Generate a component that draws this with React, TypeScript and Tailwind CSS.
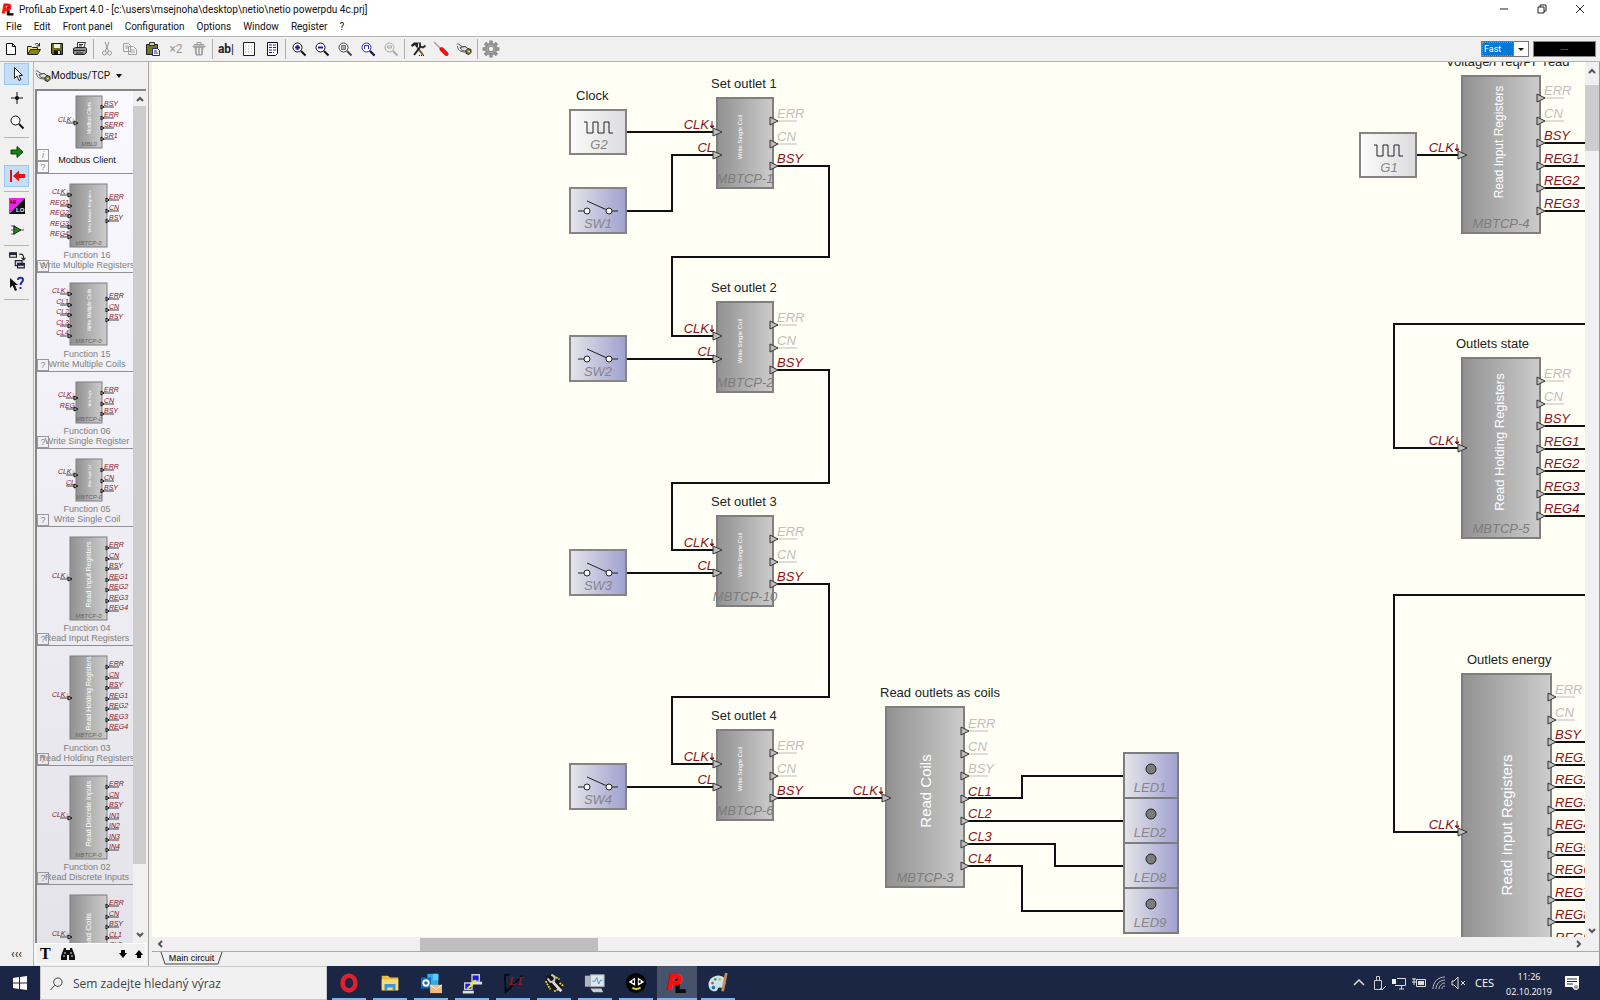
import type { ReactNode } from "react";
import clsx from "clsx";

type Pin = { label: string; y: number; off?: boolean };

type BlockProps = {
  x: number;
  y: number;
  w: number;
  h: number;
  title?: string;
  titleX?: number;
  name: string;
  text: string;
  textSize: number;
  textX: number;
  textY: number;
  inputs: Pin[];
  outputs: Pin[];
};

const pins = (labels: string[], start: number, step: number, off: string[] = []): Pin[] =>
  labels.map((label, i) => ({ label, y: start + Math.round(i * step), off: off.includes(label) }));

/* ---------- schematic ---------- */

function Block(p: BlockProps) {
  const right = p.x + p.w;
  return (
    <g>
      {p.title ? (
        <text x={p.titleX} y={p.y - 10} fontSize={13} fill="#222">
          {p.title}
        </text>
      ) : null}
      <rect x={p.x} y={p.y} width={p.w} height={p.h} fill="url(#block)" stroke="#7f7f7f" strokeWidth={2} />
      <text
        transform={`translate(${p.textX} ${p.textY}) rotate(-90)`}
        textAnchor="middle"
        fontSize={p.textSize}
        fill="#fff"
      >
        {p.text}
      </text>
      <text x={p.x + p.w / 2} y={p.y + p.h - 5} textAnchor="middle" fontSize={13} fontStyle="italic" fill="#7c7c7c">
        {p.name}
      </text>
      {p.inputs.map((pin) => (
        <g key={pin.label}>
          <text
            x={p.x - (pin.label === "CLK" ? 8 : 3)}
            y={pin.y - 3}
            textAnchor="end"
            fontSize={13}
            fontStyle="italic"
            fill="#8b1018"
          >
            {pin.label}
          </text>
          {pin.label === "CLK" ? (
            <path d={`M${p.x - 5} ${pin.y - 11}v7M${p.x - 7} ${pin.y - 6}h4l-2 2z`} stroke="#8b1018" fill="#8b1018" />
          ) : null}
          <path d={`M${p.x - 4} ${pin.y - 4}l9 4l-9 4z`} fill="#bdbdbd" stroke="#333" />
        </g>
      ))}
      {p.outputs.map((pin) => (
        <g key={pin.label}>
          {pin.off ? <path d={`M${right + 4} ${pin.y}h20`} stroke="#bdbdbd" /> : null}
          <text x={right + 4} y={pin.y - 3} fontSize={13} fontStyle="italic" fill={pin.off ? "#c0c0c0" : "#8b1018"}>
            {pin.label}
          </text>
          <path d={`M${right - 3} ${pin.y - 4}l8 4l-8 4z`} fill="#bdbdbd" stroke="#333" />
        </g>
      ))}
    </g>
  );
}

function Clock({ x, y, name }: { x: number; y: number; name: string }) {
  return (
    <g>
      <rect x={x} y={y} width={56} height={44} fill="url(#clock)" stroke="#858585" strokeWidth={2} />
      <path d={`M${x + 14} ${y + 12}h3v11h6v-11h5v11h6v-11h5v11h4`} fill="none" stroke="#222" />
      <text x={x + 29} y={y + 39} textAnchor="middle" fontSize={13} fontStyle="italic" fill="#868686">
        {name}
      </text>
    </g>
  );
}

function Switch({ y, name }: { y: number; name: string }) {
  return (
    <g>
      <rect x={570} y={y} width={56} height={45} fill="url(#lilac)" stroke="#858585" strokeWidth={2} />
      <path d={`M578 ${y + 23}h6M612 ${y + 23}h6M587 ${y + 13}l20 9`} stroke="#222" />
      <circle cx={587} cy={y + 23} r={3} fill="#fff" stroke="#222" />
      <circle cx={609} cy={y + 23} r={3} fill="#fff" stroke="#222" />
      <text x={598} y={y + 40} textAnchor="middle" fontSize={13} fontStyle="italic" fill="#868686">
        {name}
      </text>
    </g>
  );
}

function Led({ y, name }: { y: number; name: string }) {
  return (
    <g>
      <rect x={1124} y={y} width={54} height={45} fill="url(#lilac)" stroke="#7d7d7d" strokeWidth={2} />
      <circle cx={1151} cy={y + 16} r={5} fill="#7b7b7b" stroke="#222" />
      <text x={1150} y={y + 39} textAnchor="middle" fontSize={13} fontStyle="italic" fill="#868686">
        {name}
      </text>
    </g>
  );
}

const OUTLETS = [
  { y: 98, n: 1, name: "MBTCP-1", drop: 257, next: 336 },
  { y: 302, n: 2, name: "MBTCP-2", drop: 483, next: 550 },
  { y: 516, n: 3, name: "MBTCP-10", drop: 697, next: 764 },
  { y: 730, n: 4, name: "MBTCP-6", drop: 0, next: 0 },
];

const WIRES = [
  "M627 132H713",
  "M627 211H672V155H713",
  "M627 359H713",
  "M627 573H713",
  "M627 787H713",
  "M777 798H883",
  "M968 798H1022V776H1123",
  "M968 821H1123",
  "M968 844H1055V866H1123",
  "M968 866H1022V911H1123",
  "M1417 155H1458",
  "M1585 324H1394V448H1458",
  "M1585 595H1394V832H1458",
];

const OFF = ["ERR", "CN"];
const REGS = ["REG1", "REG2", "REG3", "REG4", "REG5", "REG6", "REG7", "REG8", "REG9"];

function Circuit() {
  const live4 = pins(["ERR", "CN", "BSY", ...REGS.slice(0, 3)], 98, 22.6, OFF);
  const live5 = pins(["ERR", "CN", "BSY", ...REGS.slice(0, 4)], 381, 22.5, OFF);
  const energy = pins(["ERR", "CN", "BSY", ...REGS], 697, 22.5, OFF);
  const right = (list: Pin[], x: number) => list.filter((p) => !p.off).map((p) => `M${x} ${p.y}H1586`);
  const wires = [...WIRES, ...right(live4, 1545), ...right(live5, 1545), ...right(energy, 1555)];

  return (
    <svg className="absolute inset-0 h-full w-full" fontFamily="'Liberation Sans', Arial, sans-serif" aria-label="Main circuit">
      <defs>
        <linearGradient id="block">
          <stop offset="0" stopColor="#919191" />
          <stop offset="1" stopColor="#cccccc" />
        </linearGradient>
        <linearGradient id="clock">
          <stop offset="0" stopColor="#fbfbfb" />
          <stop offset="1" stopColor="#dcdcde" />
        </linearGradient>
        <linearGradient id="lilac">
          <stop offset="0" stopColor="#e5e5e9" />
          <stop offset="1" stopColor="#a0a0d0" />
        </linearGradient>
      </defs>
      <g transform="translate(-152 -62)">
        <g fill="none" stroke="#111" strokeWidth={2}>
          {wires.map((d) => (
            <path key={d} d={d} />
          ))}
          {OUTLETS.filter((o) => o.next).map((o) => (
            <path key={o.n} d={`M777 ${o.y + 68}H829V${o.drop}H672V${o.next}H713`} />
          ))}
        </g>

        <text x={576} y={100} fontSize={13} fill="#222">
          Clock
        </text>
        <Clock x={570} y={110} name="G2" />
        <Clock x={1360} y={133} name="G1" />
        <Switch y={188} name="SW1" />
        <Switch y={336} name="SW2" />
        <Switch y={550} name="SW3" />
        <Switch y={764} name="SW4" />

        {OUTLETS.map((o) => (
          <Block
            key={o.n}
            x={717}
            y={o.y}
            w={56}
            h={90}
            title={`Set outlet ${o.n}`}
            titleX={711}
            name={o.name}
            text="Write Single Coil"
            textSize={6}
            textX={742}
            textY={o.y + 39}
            inputs={pins(["CLK", "CL"], o.y + 34, 23)}
            outputs={pins(["ERR", "CN", "BSY"], o.y + 23, 22.5, OFF)}
          />
        ))}

        <Block
          x={886}
          y={707}
          w={78}
          h={180}
          title="Read outlets as coils"
          titleX={880}
          name="MBTCP-3"
          text="Read Coils"
          textSize={15}
          textX={931}
          textY={791}
          inputs={pins(["CLK"], 798, 0)}
          outputs={pins(["ERR", "CN", "BSY", "CL1", "CL2", "CL3", "CL4"], 731, 22.5, ["ERR", "CN", "BSY"])}
        />
        <Led y={753} name="LED1" />
        <Led y={798} name="LED2" />
        <Led y={843} name="LED8" />
        <Led y={888} name="LED9" />

        <Block
          x={1462}
          y={76}
          w={78}
          h={157}
          title="Voltage/Freq/PF read"
          titleX={1446}
          name="MBTCP-4"
          text="Read Input Registers"
          textSize={12}
          textX={1503}
          textY={142}
          inputs={pins(["CLK"], 155, 0)}
          outputs={live4}
        />
        <Block
          x={1462}
          y={358}
          w={78}
          h={180}
          title="Outlets state"
          titleX={1456}
          name="MBTCP-5"
          text="Read Holding Registers"
          textSize={13}
          textX={1504}
          textY={442}
          inputs={pins(["CLK"], 448, 0)}
          outputs={live5}
        />
        <Block
          x={1462}
          y={674}
          w={89}
          h={316}
          title="Outlets energy"
          titleX={1467}
          name=""
          text="Read Input Registers"
          textSize={15}
          textX={1512}
          textY={825}
          inputs={pins(["CLK"], 832, 0)}
          outputs={energy}
        />
      </g>
    </svg>
  );
}

/* ---------- component library ---------- */

type LibItem = {
  lines: string[];
  info?: boolean;
  height: string;
  wide?: boolean;
  top: number;
  h: number;
  text: string;
  size: number;
  name: string;
  ins: Pin[];
  outs: Pin[];
};

const regOuts = ["ERR", "CN", "BSY", "REG1", "REG2", "REG3", "REG4"];

const LIBRARY: LibItem[] = [
  { lines: ["Modbus Client"], info: true, height: "h-[83px]", top: 5, h: 52, text: "Modbus Client", size: 5, name: "MBL0", ins: pins(["CLK"], 32, 0), outs: pins(["BSY", "ERR", "SERR", "SR1"], 16, 10.5) },
  { lines: ["Function 16", "Write Multiple Registers"], height: "h-[99px]", wide: true, top: 10, h: 63, text: "Write Multiple Registers", size: 4, name: "MBTCP-0", ins: pins(["CLK", "REG1", "REG2", "REG3", "REG4"], 21, 10.5), outs: pins(["ERR", "CN", "BSY"], 26, 10.5) },
  { lines: ["Function 15", "Write Multiple Coils"], height: "h-[99px]", wide: true, top: 10, h: 62, text: "Write Multiple Coils", size: 5, name: "MBTCP-0", ins: pins(["CLK", "CL1", "CL2", "CL3", "CL4"], 21, 10.5), outs: pins(["ERR", "CN", "BSY"], 26, 10.5) },
  { lines: ["Function 06", "Write Single Register"], height: "h-[77px]", top: 10, h: 41, text: "Write Single", size: 3, name: "MBTCP-0", ins: pins(["CLK", "REG"], 26, 10.5), outs: pins(["ERR", "CN", "BSY"], 21, 10.5) },
  { lines: ["Function 05", "Write Single Coil"], height: "h-[78px]", top: 10, h: 42, text: "Write Single Coil", size: 3, name: "MBTCP-0", ins: pins(["CLK", "CL"], 26, 10.5), outs: pins(["ERR", "CN", "BSY"], 21, 10.5) },
  { lines: ["Function 04", "Read Input Registers"], height: "h-[119px]", wide: true, top: 10, h: 83, text: "Read Input Registers", size: 7, name: "MBTCP-0", ins: pins(["CLK"], 52, 0), outs: pins(regOuts, 21, 10.5) },
  { lines: ["Function 03", "Read Holding Registers"], height: "h-[120px]", wide: true, top: 10, h: 83, text: "Read Holding Registers", size: 7, name: "MBTCP-0", ins: pins(["CLK"], 52, 0), outs: pins(regOuts, 21, 10.5) },
  { lines: ["Function 02", "Read Discrete Inputs"], height: "h-[119px]", wide: true, top: 10, h: 83, text: "Read Discrete Inputs", size: 7, name: "MBTCP-0", ins: pins(["CLK"], 52, 0), outs: pins(["ERR", "CN", "BSY", "IN1", "IN2", "IN3", "IN4"], 21, 10.5) },
  { lines: ["Function 01", "Read Coils"], height: "h-[119px]", wide: true, top: 10, h: 83, text: "Read Coils", size: 8, name: "MBTCP-0", ins: pins(["CLK"], 52, 0), outs: pins(["ERR", "CN", "BSY", "CL1", "CL2", "CL3", "CL4"], 21, 10.5) },
];

function Thumb({ item }: { item: LibItem }) {
  const x = item.wide ? 33 : 39;
  const w = item.wide ? 37 : 26;
  return (
    <svg
      width={96}
      height={item.top + item.h + 1}
      className="block shrink-0 overflow-visible"
      fontFamily="'Liberation Sans', Arial, sans-serif"
      aria-hidden="true"
    >
      <rect x={x} y={item.top} width={w} height={item.h} fill="url(#block)" stroke="#7f7f7f" />
      <text
        transform={`translate(${x + w / 2 + 2} ${item.top + item.h / 2 - 4}) rotate(-90)`}
        textAnchor="middle"
        fontSize={item.size}
        fill="#fff"
      >
        {item.text}
      </text>
      <text x={x + w / 2} y={item.top + item.h - 2} textAnchor="middle" fontSize={6} fontStyle="italic" fill="#666">
        {item.name}
      </text>
      {item.ins.map((p) => (
        <g key={p.label}>
          <path d={`M${x - 10} ${p.y}h10`} stroke="#444" />
          <path d={`M${x - 2} ${p.y - 2}l4 2l-4 2z`} fill="#bbb" stroke="#111" />
          <text x={x - 1} y={p.y - 1} textAnchor="end" fontSize={7} fontStyle="italic" fill="#8b1018">
            {p.label === "CLK" ? "CLK↓" : p.label}
          </text>
        </g>
      ))}
      {item.outs.map((p) => (
        <g key={p.label}>
          <path d={`M${x + w} ${p.y}h12`} stroke="#444" />
          <path d={`M${x + w - 1} ${p.y - 2}l3 2l-3 2z`} fill="#bbb" stroke="#111" />
          <text x={x + w + 2} y={p.y - 1} fontSize={7} fontStyle="italic" fill="#8b1018">
            {p.label}
          </text>
        </g>
      ))}
    </svg>
  );
}

function SmallBox({ children }: { children: ReactNode }) {
  return (
    <button className="flex h-3 w-3 items-center justify-center border border-[#999] font-['Liberation_Sans',sans-serif] text-[9px] leading-none text-[#888]">
      {children}
    </button>
  );
}

function LibraryRow({ item }: { item: LibItem }) {
  return (
    <li className={clsx("relative flex shrink-0 flex-col justify-between overflow-hidden border-b border-[#909090]", item.height)}>
      <Thumb item={item} />
      <div
        className={clsx(
          "flex flex-col items-center pl-1 font-['Liberation_Sans',sans-serif] text-[9px] leading-[10px] whitespace-nowrap",
          item.info ? "pb-2 text-[#111]" : "pb-0.5 text-[#808080]"
        )}
      >
        {item.lines.map((line) => (
          <span key={line}>{line}</span>
        ))}
      </div>
      <div className="absolute bottom-0 left-0">
        {item.info ? (
          <SmallBox>
            <i>i</i>
          </SmallBox>
        ) : null}
        <SmallBox>?</SmallBox>
      </div>
    </li>
  );
}

/* ---------- icons ---------- */

function Icon({ children, size = 16 }: { children: ReactNode; size?: number }) {
  return (
    <svg width={size} height={size} viewBox="0 0 16 16" fill="none" aria-hidden="true" className="shrink-0">
      {children}
    </svg>
  );
}

function Lens({ color = "#111", mark, tint = "#fff" }: { color?: string; mark?: ReactNode; tint?: string }) {
  return (
    <Icon>
      <circle cx="6.500" cy="6.500" r="4.500" fill={tint} stroke={color} />
      <path d="M10 10l4.500 4.500" stroke={color} strokeWidth="2" />
      {mark}
    </Icon>
  );
}

const PlugIcon = () => (
  <Icon>
    <path d="M1 3.500c0-1 1-1 2 0l3 2h4M1.500 5c0 4 3 6 8 6" stroke="#555" />
    <path d="M4 6.500l5-1 3 2-1 3-5-1z" fill="#ddd" stroke="#555" />
    <path d="M10 9.500l2-2 3 1v3l-2 2-3-1z" fill="#8d8930" stroke="#222" />
    <path d="M12 10.500h2" stroke="#eee56a" />
  </Icon>
);

const gearTeeth = [0, 45, 90, 135, 180, 225, 270, 315];

const TOOLBAR: { label: string; icon: ReactNode }[][] = [
  [
    { label: "New", icon: <Icon><path d="M3.500 2.500h6l3 3v8h-9zM9.500 2.500v3h3" fill="#fff" stroke="#111" /></Icon> },
    {
      label: "Open",
      icon: (
        <Icon>
          <path d="M1.500 13V5.500h4l1 1h5V9" fill="#e8e070" stroke="#222" />
          <path d="M1.500 13.500L4.500 8.500h10l-3 5z" fill="#85851a" stroke="#222" />
          <path d="M9 3.500c2-2 3-1 4 1M13.500 2v3h-3" stroke="#222" />
        </Icon>
      ),
    },
    {
      label: "Save",
      icon: (
        <Icon>
          <path d="M2.500 2.500h11v11h-10l-1-1z" fill="#6e6e17" stroke="#111" />
          <path d="M5 3h6v4H5z" fill="#eee" />
          <path d="M5 9.500h7V13H5z" fill="#111" />
          <path d="M9 10h2v3H9z" fill="#ddd" />
        </Icon>
      ),
    },
    {
      label: "Print",
      icon: (
        <Icon>
          <path d="M5.500 7V1.500h8L11.500 7" fill="#fff" stroke="#333" />
          <path d="M1.500 7.500l2-1h10l1 1v4l-2 2h-10l-1-1z" fill="#8f8f8f" stroke="#222" />
          <path d="M2 9.500h11M4 12h7M7 3.500h4M7 5h3" stroke="#222" />
          <path d="M9 10.500h2" stroke="#ccc430" />
        </Icon>
      ),
    },
  ],
  [
    {
      label: "Cut",
      icon: (
        <Icon>
          <path d="M6 1l3.500 9M10 1L6.500 10" stroke="#999" />
          <circle cx="5.500" cy="12" r="2" stroke="#999" />
          <circle cx="10.500" cy="12" r="2" stroke="#999" />
        </Icon>
      ),
    },
    { label: "Copy", icon: <Icon><path d="M1.500 2.500h5l2 2v6h-7zM6.500 5.500h5l3 3v5h-8zM3 5h3M3 7h3M8 9h4M8 11h5" fill="#f3f3f3" stroke="#a0a0a0" /></Icon> },
    {
      label: "Paste",
      icon: (
        <Icon>
          <path d="M1.500 3.500h11v10h-11z" fill="#77761f" stroke="#222" />
          <path d="M4.500 1.500h5v3h-5z" fill="#ccc" stroke="#333" />
          <path d="M7.500 7.500h5l2 2v5h-7z" fill="#fff" stroke="#26267f" />
          <path d="M9 10h3M9 12h4" stroke="#26267f" />
        </Icon>
      ),
    },
    { label: "Duplicate", icon: <span className="text-xs text-[#999]">×2</span> },
    { label: "Delete", icon: <Icon><path d="M3 3.500h10M6 3V1.500h4V3M2 5h12v1H2z" stroke="#999" /><path d="M4 6h8l-1 8H5z" fill="#b3b3b3" stroke="#999" /><path d="M6.500 7v6M9.500 7v6" stroke="#eee" /></Icon> },
  ],
  [
    { label: "Text", icon: <span className="text-xs whitespace-nowrap text-[#222]"><b>ab</b>|</span> },
    {
      label: "Grid",
      icon: (
        <Icon>
          <path d="M2.500 1.500h11v13h-11z" fill="#fff" stroke="#222" />
          <path d="M4 5h9M4 8h9M4 11h9" stroke="#aaa" strokeDasharray="1 2" />
        </Icon>
      ),
    },
    {
      label: "Parts list",
      icon: (
        <Icon>
          <path d="M3.500 1.500h10v11l-2 2h-8z" fill="#fff" stroke="#111" />
          <path d="M5 4h7M5 6.500h7M5 9h7M5 11.500h5" stroke="#2020d0" strokeDasharray="3 1" />
        </Icon>
      ),
    },
  ],
  [
    { label: "Zoom in", icon: <Lens mark={<path d="M4 6.500h5M6.500 4v5" stroke="#1010e0" strokeWidth="2" />} /> },
    { label: "Zoom out", icon: <Lens mark={<path d="M4 6.500h5" stroke="#1010e0" strokeWidth="2" />} /> },
    { label: "Zoom page", icon: <Lens color="#444" mark={<path d="M4.500 4.500h4v4h-4z" fill="#aaa" stroke="#777" />} /> },
    { label: "Zoom all", icon: <Lens color="#2a2ac8" mark={<><path d="M4.500 8V4.500h4V8" stroke="#2a2ac8" /><path d="M10 10l4.500 4.500" stroke="#222" strokeWidth="2" /></>} /> },
    { label: "Zoom selection", icon: <Lens color="#aaa" tint="#eee" mark={<path d="M4.500 5h4v2h-4z" stroke="#aaa" />} /> },
  ],
  [
    {
      label: "Tools",
      icon: (
        <Icon>
          <path d="M1 4l3-2.500h5L8 3v3H6L5 4 2 6z" fill="#222" />
          <path d="M7 6l6 8" stroke="#7a5a30" strokeWidth="2" />
          <path d="M11 5L4 14" stroke="#222" strokeWidth="2" />
          <path d="M10 1.500v4l3 1 2.500-2" stroke="#333" strokeWidth="2" />
          <path d="M9 14.500h6" stroke="#222" strokeDasharray="1 1" />
        </Icon>
      ),
    },
    { label: "Screwdriver", icon: <Icon><path d="M1 1l6 6" stroke="#b99" strokeWidth="1.500" /><path d="M8.500 8l5 5" stroke="#e11" strokeWidth="4" strokeLinecap="round" /></Icon> },
    { label: "Connect", icon: <PlugIcon /> },
  ],
  [
    {
      label: "Settings",
      icon: (
        <Icon size={18}>
          {gearTeeth.map((a) => (
            <path key={a} d="M7 1h2v3H7z" fill="#999" stroke="#888" transform={`rotate(${a} 8 8)`} />
          ))}
          <circle cx="8" cy="8" r="4.500" fill="#bbb" stroke="#909090" strokeWidth="2" />
          <circle cx="8" cy="8" r="2.500" fill="#f0f0f0" stroke="#888" />
        </Icon>
      ),
    },
  ],
];

const SIDE_TOOLS: { label: string; icon: ReactNode; on?: boolean }[][] = [
  [
    { label: "Select", on: true, icon: <Icon><path d="M5.500 1.500v11l2.500-2.500 2 4.500 2-1-2-4h3.500z" fill="#fff" stroke="#222" /></Icon> },
    { label: "Wire", icon: <Icon><path d="M8 2v12M2 8h12" stroke="#111" /><circle cx="8" cy="8" r="2" fill="#111" /></Icon> },
    { label: "Zoom", icon: <Lens /> },
  ],
  [
    { label: "Run", icon: <Icon><path d="M2 6h6V2.500l6 5.500-6 5.500V10H2z" fill="#158515" stroke="#0b3d0b" /></Icon> },
    { label: "Stop", on: true, icon: <Icon><path d="M2 2v12" stroke="#e01010" strokeWidth="2" /><path d="M16 6h-6V2.500L4 8l6 5.500V10h6z" fill="#e81010" /></Icon> },
  ],
  [
    {
      label: "High low",
      icon: (
        <Icon>
          <path d="M0 0h16L0 16z" fill="#f020f0" />
          <path d="M16 0v16H0z" fill="#111" />
          <text x="1" y="6" fontSize="6" fontWeight="bold" fill="#222" fontFamily="Liberation Sans">HI</text>
          <text x="7" y="14" fontSize="6" fontWeight="bold" fill="#eee" fontFamily="Liberation Sans">LO</text>
        </Icon>
      ),
    },
    { label: "Probe", icon: <Icon><path d="M5 3v10M2 4h3M2 8h3M2 12h3M12 8h3" stroke="#555" /><path d="M5 4l7 4-7 4z" fill="#159015" stroke="#222" /></Icon> },
  ],
  [
    {
      label: "Windows",
      icon: (
        <Icon size={18}>
          <path d="M1.500 1.500h6v4h-6zM8.500 11h6v4h-6zM6.500 8.500h6V11h-4v2h-2z" fill="#dde" stroke="#222" />
          <path d="M1 2.500h7M8 12h7" stroke="#224" strokeWidth="2" />
          <path d="M10 3c3-1 4 1 4 4M12 6l2 2 1.500-2" stroke="#222" />
        </Icon>
      ),
    },
    {
      label: "Help",
      icon: (
        <Icon>
          <path d="M1 2v10l2.500-2.500L6 15l2-1-2-5h3z" fill="#111" />
          <path d="M9 4c0-3 5-3 5 0 0 2-2.500 2-2.500 5" stroke="#2a2ab0" strokeWidth="2" />
          <path d="M10.500 11h2v2h-2z" fill="#2a2ab0" />
        </Icon>
      ),
    },
  ],
];

const Chevron = ({ d }: { d: string }) => (
  <svg width={8} height={8} viewBox="0 0 8 8" fill="none" stroke="#555" strokeWidth={2} aria-hidden="true">
    <path d={d} />
  </svg>
);

const UP = "M1 6l3-3 3 3";
const DOWN = "M1 2l3 3 3-3";
const LEFT = "M6 1L3 4l3 3";
const RIGHT = "M2 1l3 3-3 3";

function LogoMark() {
  return (
    <g fontFamily="'Liberation Sans', Arial, sans-serif" fontWeight="bold" strokeWidth={2}>
      <text x="10" y="22" fontSize="18" fill="#0a0a0a" stroke="#0a0a0a">
        L
      </text>
      <text x="2" y="19" fontSize="22" fontStyle="italic" fill="#ff0d0d" stroke="#ff0d0d">
        P
      </text>
    </g>
  );
}

/* ---------- task bar ---------- */

const APPS: { label: string; on?: boolean; icon: ReactNode }[] = [
  { label: "Opera", icon: <ellipse cx="12" cy="12" rx="7" ry="8" stroke="#e0202c" strokeWidth="5" /> },
  {
    label: "Explorer",
    icon: (
      <>
        <path d="M3 4h7l2 2h9v14H3z" fill="#f0b840" />
        <path d="M3 8h18v12H3z" fill="#fcd876" />
        <path d="M6 20v-7h12v7h-3v-3H9v3z" fill="#3d96dc" />
      </>
    ),
  },
  {
    label: "Outlook",
    icon: (
      <>
        <path d="M8 2h12v15H8z" fill="#35a8e8" />
        <path d="M14 2h6v7h-6z" fill="#5cc9f5" />
        <path d="M1 6h11v12H1z" fill="#0f6cbd" />
        <circle cx="6.500" cy="12" r="3" stroke="#fff" strokeWidth="2" />
        <path d="M11 14h13v9H11z" fill="#f3bb7c" />
        <path d="M11 14l6.500 5 6.500-5" stroke="#fff" />
      </>
    ),
  },
  {
    label: "PuTTY",
    icon: (
      <>
        <path d="M12 3h8v7h-8zM4 12h8v7H4z" fill="#1a1ae0" stroke="#ccc" strokeWidth="1.500" />
        <path d="M11 12h12M2 22h12" stroke="#ddd" strokeWidth="3" />
        <path d="M16 9l-5 4 1 1-5 4" stroke="#f0ee20" strokeWidth="2" />
      </>
    ),
  },
  {
    label: "LT",
    icon: (
      <>
        <path d="M3 3l1 19L22 4M3 3h5" stroke="#080810" strokeWidth="2" />
        <text x="7" y="14" fontSize="14" fontWeight="bold" fontStyle="italic" fontFamily="Liberation Serif" fill="#8b1822">LT</text>
      </>
    ),
  },
  {
    label: "Service tool",
    icon: (
      <>
        <path d="M3 5l8-3 8 8 2 7-8 4-9-8z" fill="#15151a" />
        <path d="M3 10l5 9M9 3l9 5M18 12l4 3M12 21l5-2" stroke="#e8dc20" strokeWidth="2" strokeDasharray="2 1" />
        <path d="M10 10l10 11" stroke="#ddd" strokeWidth="3" />
        <path d="M5 7l3 4 4-1 1-4-3-3" stroke="#ccc" strokeWidth="2" />
      </>
    ),
  },
  {
    label: "Monitor",
    icon: (
      <>
        <path d="M1 4h14v12H1z" fill="#adb4bd" />
        <path d="M7 3h15v13H7z" fill="#dde7ee" stroke="#9ba6b0" />
        <path d="M9 10h3l2-4 2 7 2-4h2" stroke="#3a90c8" />
        <path d="M7 18h12l2 4H10z" fill="#c7cdd3" />
      </>
    ),
  },
  {
    label: "Face",
    icon: (
      <>
        <circle cx="12" cy="12" r="11" fill="#050505" />
        <path d="M11 6l-7 5 7 4zM14 6l7 5-7 4z" fill="#fff" />
        <path d="M9 9v3M16 9v3" stroke="#111" strokeWidth="2" />
        <path d="M8 17c2 2 6 2 9 0" stroke="#e8d820" strokeWidth="2" />
      </>
    ),
  },
  { label: "ProfiLab", on: true, icon: <LogoMark /> },
  {
    label: "Paint",
    icon: (
      <>
        <path d="M2 16C0 9 7 3 14 4c7 1 7 8 5 12-2 3-4 0-6 1s-1 4-4 4-6-1-7-5z" fill="#c8e4f0" />
        <circle cx="6" cy="12" r="1.500" fill="#e04040" />
        <circle cx="9" cy="8" r="1.500" fill="#40a850" />
        <circle cx="14" cy="8" r="1.500" fill="#f0b020" />
        <circle cx="7" cy="17" r="2" fill="#2e6db0" />
        <path d="M21 1L17 21" stroke="#c98a55" strokeWidth="3" />
      </>
    ),
  },
];

function Taskbar() {
  return (
    <footer className="flex h-[34px] shrink-0 items-stretch bg-[#1a2643] font-['Open_Sans',sans-serif] text-white">
      <button aria-label="Start" className="flex w-10 items-center justify-center">
        <svg width={14} height={14} viewBox="0 0 14 14" fill="#fff" aria-hidden="true">
          <path d="M0 2l6-1v5.500H0zM7 1l7-1v6.500H7zM0 7.500h6V13l-6-1zM7 7.500h7V14l-7-1z" />
        </svg>
      </button>
      <label className="flex w-[287px] items-center gap-2.5 border border-[#c8c8c8] bg-[#f1f1f1] pt-0.5 pl-[9px] text-[#333]">
        <svg width={13} height={14} viewBox="0 0 14 14" fill="none" stroke="#333" aria-hidden="true">
          <circle cx="8.500" cy="5" r="4.500" />
          <path d="M5 8.500L0.500 13.500" />
        </svg>
        <input
          aria-label="Search"
          placeholder="Sem zadejte hledaný výraz"
          className="min-w-0 flex-1 bg-transparent text-xs outline-none placeholder:text-[#444]"
        />
      </label>
      <nav className="flex gap-px pl-0.5">
        {APPS.map((app) => (
          <button
            key={app.label}
            aria-label={app.label}
            className={clsx("relative flex w-10 items-center justify-center", app.on && "bg-[#48526a]")}
          >
            <svg width={22} height={22} viewBox="0 0 24 24" fill="none" aria-hidden="true">
              {app.icon}
            </svg>
            <span className={clsx("absolute bottom-0 h-0.5 bg-[#76b9ed]", app.on ? "inset-x-0" : "inset-x-[3px]")} />
          </button>
        ))}
      </nav>
      <div className="ml-auto flex items-center pr-5 text-[11px]">
        <div className="flex items-center gap-1">
          <Icon><path d="M3 10l5-5 5 5" stroke="#ddd" strokeWidth="1.500" /></Icon>
          <Icon><path d="M3.500 5.500h7v9h-7zM5.500 5V1.500h3V5M9 13l2 2 4-4" stroke="#ccc" /></Icon>
          <Icon><path d="M6 3.500h8.500v7H4M8 14h5M10.500 11v3" stroke="#ddd" /><path d="M1 4h4v5H1z" fill="#eee" /></Icon>
          <Icon><path d="M5.500 4.500h9v7h-9zM1 4h4M1 7h4M3 3v7" stroke="#ddd" /><path d="M7 6h6v4H7z" fill="#ddd" /></Icon>
          <Icon><path d="M2 14C2 7 7 2 14 2M5 14c0-5 4-9 9-9M8 14c0-3 3-6 6-6M11 14c0-2 1-3 3-3" stroke="#bbb" /></Icon>
          <Icon><path d="M1 6h2l4-4v12L3 10H1zM10 6l4 4M14 6l-4 4" stroke="#ddd" /></Icon>
        </div>
        <span className="pl-2">CES</span>
        <div className="flex flex-col items-center px-3 pt-0.5 text-[9px] leading-[15px]">
          <span>11:26</span>
          <span>02.10.2019</span>
        </div>
        <button aria-label="Notifications">
          <Icon>
            <path d="M1 1h14v11h-4v3l-3-3H1z" fill="#fff" />
            <path d="M3 4h10M3 6.500h10M3 9h6" stroke="#1a2643" />
            <circle cx="12" cy="12" r="2.500" fill="#999" stroke="#fff" />
          </Icon>
        </button>
      </div>
    </footer>
  );
}

/* ---------- window ---------- */

const MENU = ["File", "Edit", "Front panel", "Configuration", "Options", "Window", "Register", "?"];

export default function App() {
  return (
    <div className="flex h-screen flex-col overflow-hidden bg-[#f0f0f0] font-['Roboto',sans-serif] text-[10px] text-[#111]">
      <header className="flex h-[18px] shrink-0 items-center bg-white pl-px">
        <svg width={14} height={14} viewBox="0 0 24 24" fill="none" aria-hidden="true">
          <LogoMark />
        </svg>
        <h1 className="pt-0.5 pl-1 leading-4">{"ProfiLab Expert 4.0 - [c:\\users\\msejnoha\\desktop\\netio\\netio powerpdu 4c.prj]"}</h1>
        <div className="ml-auto flex gap-[22px] pr-3">
          {["M4 8h8", "M4 6h6v6H4zM6 6V4h6v6h-2", "M4 4l8 8M12 4l-8 8"].map((d, i) => (
            <button key={d} aria-label={["Minimize", "Restore", "Close"][i]}>
              <Icon>
                <path d={d} stroke="#222" />
              </Icon>
            </button>
          ))}
        </div>
      </header>

      <nav className="flex h-[18px] shrink-0 items-center gap-3 bg-white pl-1.5">
        {MENU.map((m) => (
          <button key={m} className="leading-4">
            {m}
          </button>
        ))}
      </nav>

      <div className="flex h-[26px] shrink-0 items-center gap-px border-y border-[#b4b4b4]">
        {TOOLBAR.map((group, i) => (
          <div key={group[0].label} className="flex items-center gap-px">
            {i > 0 ? <span className="flex h-5 w-[3px] justify-center"><span className="w-px bg-[#b0b0b0]" /></span> : null}
            {group.map((b) => (
              <button key={b.label} aria-label={b.label} className="flex h-[22px] w-[22px] items-center justify-center">
                {b.icon}
              </button>
            ))}
          </div>
        ))}
        <div className="ml-auto flex gap-1 pr-1">
          <div className="relative flex h-4 w-12 border border-[#777] bg-white">
            <select
              aria-label="Speed"
              className="block h-full w-8 appearance-none border border-dotted border-[#d08030] bg-[#0078d7] pl-px text-[9px] leading-3 text-white"
            >
              <option>Fast</option>
            </select>
            <svg className="pointer-events-none absolute top-1.5 right-1" width={6} height={4} aria-hidden="true">
              <path d="M0 0h6L3 3z" fill="#111" />
            </svg>
          </div>
          <div className="flex h-4 w-[63px] items-center justify-center border border-[#888] bg-black text-[9px] leading-none text-[#20b030]">
            ---
          </div>
        </div>
      </div>

      <main className="flex min-h-0 flex-1">
        <div className="flex w-[34px] shrink-0 flex-col items-center border-r border-[#b8b8b8] pt-px pb-1">
          {SIDE_TOOLS.map((group) => (
            <div key={group[0].label} className="mb-[3px] flex w-[25px] flex-col gap-0.5 border-b border-[#b4b4b4] pb-1">
              {group.map((t) => (
                <button
                  key={t.label}
                  aria-label={t.label}
                  className={clsx(
                    "flex h-[22px] items-center justify-center border",
                    t.on ? "border-[#98c8ee] bg-[#c3def5]" : "border-transparent"
                  )}
                >
                  {t.icon}
                </button>
              ))}
            </div>
          ))}
          <button aria-label="Collapse" className="mt-auto text-xs">
            ‹‹‹
          </button>
        </div>

        <aside className="flex w-[115px] shrink-0 flex-col border-r border-[#a8a8a8] pr-0.5 pl-px">
          <button className="flex h-[27px] shrink-0 items-center text-[10px]">
            <PlugIcon />
            Modbus/TCP
            <svg className="ml-1.5" width={6} height={4} aria-hidden="true">
              <path d="M0 0h6L3 4z" fill="#111" />
            </svg>
          </button>
          <div className="flex min-h-0 flex-1 border-t-2 border-l-2 border-[#868686]">
            <ul className="flex w-24 flex-col overflow-hidden bg-linear-to-b from-[#f9f9ff] to-[#e3e3e9]">
              {LIBRARY.map((item) => (
                <LibraryRow key={item.lines[0]} item={item} />
              ))}
            </ul>
            <div className="flex flex-1 flex-col items-center">
              <div className="flex h-[15px] items-center"><Chevron d={UP} /></div>
              <div className="w-full flex-1 bg-[#cdcdcd]" />
              <div className="flex h-[79px] items-end pb-1"><Chevron d={DOWN} /></div>
            </div>
          </div>
          <div className="mb-0.5 flex h-[21px] shrink-0 items-center border border-white pl-1">
            <b className="font-['Liberation_Serif',serif] text-base leading-none text-black">T</b>
            <svg className="ml-2.5" width={14} height={12} viewBox="0 0 14 12" aria-hidden="true">
              <path d="M3 0h2v2h4V0h2l3 8v4H8V7H6v5H0V8z" fill="#111" />
              <path d="M2 8h2M10 8h2M4 4v2M10 4v2" stroke="#ddd" />
            </svg>
            <svg className="ml-auto" width={8} height={8} aria-hidden="true">
              <path d="M2 0h4v3h2L4 8L0 3h2z" />
            </svg>
            <svg className="mr-0.5 ml-2" width={8} height={8} aria-hidden="true">
              <path d="M2 8h4V5h2L4 0L0 5h2z" />
            </svg>
          </div>
        </aside>

        <section className="ml-[3px] flex min-w-0 flex-1 flex-col border-r border-[#999]">
          <div className="flex min-h-0 flex-1">
            <div className="relative flex-1 overflow-hidden bg-[#fffff5]">
              <Circuit />
            </div>
            <div className="flex w-[14px] flex-col items-center">
              <div className="flex h-[23px] items-center pb-1.5"><Chevron d={UP} /></div>
              <div className="h-[66px] w-full bg-[#cdcdcd]" />
              <div className="mt-auto pb-0.5"><Chevron d={DOWN} /></div>
            </div>
          </div>
          <div className="flex h-3.5 items-center pr-4">
            <div className="flex w-full items-center">
              <span className="w-[268px] pl-1"><Chevron d={LEFT} /></span>
              <span className="h-[13px] w-[178px] bg-[#bfbfbf]" />
              <span className="ml-auto"><Chevron d={RIGHT} /></span>
            </div>
          </div>
          <div className="h-[15px] border-t border-[#aaa] pl-2">
            <button className="relative flex h-[13px] w-[63px] items-center justify-center font-['Liberation_Sans',sans-serif] text-[9px] text-black">
              <svg className="absolute inset-0" width={63} height={13} fill="none" stroke="#444" aria-hidden="true">
                <path d="M1 0l4 12h53l4-12" />
              </svg>
              Main circuit
            </button>
          </div>
        </section>
      </main>

      <Taskbar />
    </div>
  );
}
